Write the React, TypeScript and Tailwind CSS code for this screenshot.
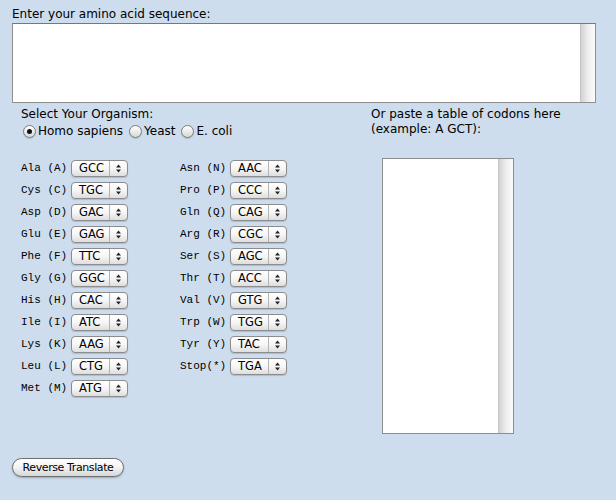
import React from 'react';

const left: [string, string][] = [
  ['Ala (A)', 'GCC'],
  ['Cys (C)', 'TGC'],
  ['Asp (D)', 'GAC'],
  ['Glu (E)', 'GAG'],
  ['Phe (F)', 'TTC'],
  ['Gly (G)', 'GGC'],
  ['His (H)', 'CAC'],
  ['Ile (I)', 'ATC'],
  ['Lys (K)', 'AAG'],
  ['Leu (L)', 'CTG'],
  ['Met (M)', 'ATG'],
];

const right: [string, string][] = [
  ['Asn (N)', 'AAC'],
  ['Pro (P)', 'CCC'],
  ['Gln (Q)', 'CAG'],
  ['Arg (R)', 'CGC'],
  ['Ser (S)', 'AGC'],
  ['Thr (T)', 'ACC'],
  ['Val (V)', 'GTG'],
  ['Trp (W)', 'TGG'],
  ['Tyr (Y)', 'TAC'],
  ['Stop(*)', 'TGA'],
];

const Scrollbar: React.FC = () => (
  <div className="w-[15px] h-full border-l border-[#c4c4c4] bg-gradient-to-r from-[#d2d2d2] via-[#eeeeee] to-[#fbfbfb]"></div>
);

const PopUp: React.FC<{ value: string }> = ({ value }) => (
  <div className="flex items-center w-[57px] h-[17px] rounded-[4px] border border-[#8c8c8c] bg-gradient-to-b from-white via-[#f6f6f6] to-[#dedede] shadow-[0_1px_1px_rgba(0,0,0,0.15)]">
    <span className="pl-[7px] pt-[1px] text-[11.5px] leading-none text-black font-['DejaVu_Sans',sans-serif]">{value}</span>
    <div className="ml-auto h-full w-[18px] border-l border-[#b4b4b4] flex items-center justify-center">
      <svg width="7" height="11" viewBox="0 0 7 11">
        <path d="M1 4.5 L3.5 1.5 L6 4.5 Z" fill="#222" />
        <path d="M1 6.5 L3.5 9.5 L6 6.5 Z" fill="#222" />
      </svg>
    </div>
  </div>
);

const Radio: React.FC<{ checked?: boolean; label: string }> = ({ checked, label }) => (
  <div className="flex items-center gap-[2px]">
    <div className="w-[13px] h-[13px] rounded-full border border-[#7c7c7c] bg-gradient-to-b from-white to-[#d8d8d8] flex items-center justify-center shadow-[0_1px_1px_rgba(0,0,0,0.15)]">
      {checked && <div className="w-[5px] h-[5px] rounded-full bg-[#111]"></div>}
    </div>
    <span>{label}</span>
  </div>
);

const CodonRow: React.FC<{ label: string; codon: string }> = ({ label, codon }) => (
  <div className="flex items-center h-[22px]">
    <span className="w-[50px] text-[11px] font-['Liberation_Mono',monospace] text-black whitespace-pre">{label}</span>
    <PopUp value={codon} />
  </div>
);

export default function App() {
  return (
    <div className="w-[616px] h-[500px] bg-[#cddded] overflow-hidden text-black font-['DejaVu_Sans',sans-serif] text-[12px] leading-[15px]">
      <div className="pl-[12px] pt-[7px]">
        <div>Enter your amino acid sequence:</div>
        <div className="mt-[1px] w-[584px] h-[80px] border border-[#8e8e8e] border-t-[#777] bg-white flex justify-end">
          <Scrollbar />
        </div>
      </div>

      <div className="flex mt-[4px]">
        <div className="w-[371px] pl-[21px]">
          <div>Select Your Organism:</div>
          <div className="flex items-center gap-[6px] h-[17px] mt-[1px] pl-[2px]">
            <Radio checked label="Homo sapiens" />
            <Radio label="Yeast" />
            <Radio label="E. coli" />
          </div>
          <div className="flex mt-[17px]">
            <div className="w-[159px] flex flex-col">
              {left.map(([l, c]) => (
                <CodonRow key={l} label={l} codon={c} />
              ))}
            </div>
            <div className="flex flex-col">
              {right.map(([l, c]) => (
                <CodonRow key={l} label={l} codon={c} />
              ))}
            </div>
          </div>
        </div>

        <div className="flex flex-col">
          <div>Or paste a table of codons here</div>
          <div>(example: A GCT):</div>
          <div className="ml-[11px] mt-[21px] w-[132px] h-[276px] border border-[#8e8e8e] bg-white flex justify-end">
            <Scrollbar />
          </div>
        </div>
      </div>

      <div className="pl-[12px] mt-[24px]">
        <button className="h-[19px] w-[112px] rounded-full border border-[#6f6f6f] bg-gradient-to-b from-white via-[#f3f3f3] to-[#d6d6d6] shadow-[0_1px_2px_rgba(0,0,0,0.25)] text-[11px] tracking-[-0.4px] leading-none text-black font-['DejaVu_Sans',sans-serif]">
          Reverse Translate
        </button>
      </div>
    </div>
  );
}
